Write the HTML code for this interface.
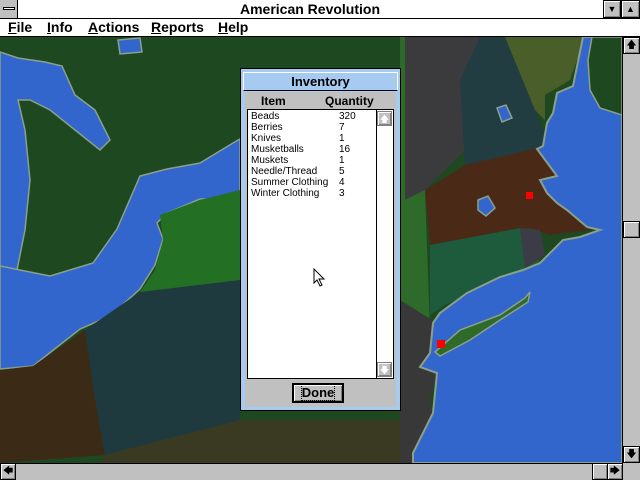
<!DOCTYPE html>
<html><head><style>
*{margin:0;padding:0;box-sizing:border-box}
body{width:640px;height:480px;overflow:hidden;background:#c0c0c0;font-family:"Liberation Sans",sans-serif;position:relative}
.abs{position:absolute}
.title{left:0;top:0;width:640px;height:19px;background:#fff;border-bottom:1px solid #000}
.menu{left:0;top:19px;width:640px;height:18px;background:#fff;border-bottom:1px solid #000;font-weight:bold;font-size:14px}
.menu span{position:absolute;top:0px}
.btn{background:#c0c0c0;border:1px solid #000;box-shadow:inset 1px 1px #fff,inset -1px -1px #808080}
.dlg{left:240px;top:68px;width:161px;height:343px;background:#a6caf0;border:1px solid #000}
.list{font-size:10px;line-height:11px}
</style></head><body>
<div class="abs title">
 <div class="abs" style="left:0;top:0;width:18px;height:18px;background:#c0c0c0;border-right:1px solid #000"><div class="abs" style="left:3px;top:7px;width:12px;height:3px;background:#fff;border:1px solid #000"></div></div>
 <div class="abs" style="left:0;width:620px;top:1px;text-align:center;font-weight:bold;font-size:14px">American Revolution</div>
 <div class="abs btn" style="left:603px;top:0;width:18px;height:18px;font-size:9px;text-align:center;line-height:17px">▼</div>
 <div class="abs btn" style="left:621px;top:0;width:19px;height:18px;font-size:9px;text-align:center;line-height:17px">▲</div>
</div>
<div class="abs menu">
 <span style="left:8px"><u>F</u>ile</span>
 <span style="left:47px"><u>I</u>nfo</span>
 <span style="left:88px"><u>A</u>ctions</span>
 <span style="left:151px"><u>R</u>eports</span>
 <span style="left:218px"><u>H</u>elp</span>
</div>
<svg class="abs" style="left:0;top:37px" width="622" height="426" viewBox="0 37 622 426">
 <rect x="0" y="37" width="622" height="426" fill="#1e4820"/>
 <polygon points="400,37 420,37 425,190 430,330 440,340 420,360 400,360" fill="#2e6a2a"/>
 <polygon points="400,300 432,320 440,360 430,400 440,440 430,463 400,463" fill="#383838"/>
 <!-- NE regions -->
 <polygon points="405,37 480,37 460,80 465,150 425,190 405,200" fill="#3b3b3e"/>
 <polygon points="480,37 505,37 535,110 550,145 530,150 465,165 460,80" fill="#213d42"/>
 <polygon points="505,37 585,37 570,80 545,95 545,120 535,110" fill="#4a5e2a"/>
 <polygon points="425,190 465,165 530,150 545,145 555,175 580,200 600,212 590,230 550,235 530,228 430,245" fill="#4a2a16"/>
 <polygon points="430,245 520,228 540,262 500,280 445,305 430,315" fill="#1e5a3c"/>
 <polygon points="520,228 540,230 545,255 525,268" fill="#3c3c46"/>
 <!-- ocean right -->
 <polygon points="583,37 622,37 622,463 413,463 413,453 433,413 437,373 420,367 430,353 433,323 440,313 467,293 500,277 523,270 540,263 563,240 580,237 600,230 587,227 567,210 557,203 547,193 540,180 557,176 537,149 543,146 547,123 553,113 557,93 573,86" fill="#3366cc" stroke="#8aa08a" stroke-width="2"/>
 <polygon points="592,37 622,37 622,115 600,108 590,90 588,60" fill="#1e4820" stroke="#8aa08a" stroke-width="1.5"/>
 <polygon points="435,352 460,330 500,315 525,298 530,292 528,302 500,320 470,340 440,356" fill="#2e6a2a" stroke="#8aa08a" stroke-width="1.5"/>
 <polygon points="478,200 488,196 495,208 486,216 478,210" fill="#3366cc" stroke="#8aa08a" stroke-width="1.5"/>
 <polygon points="497,108 506,105 512,118 502,122" fill="#3366cc" stroke="#8aa08a" stroke-width="1.5"/>
 <rect x="526" y="192" width="7" height="7" fill="#f00"/>
 <rect x="437" y="340" width="8" height="8" fill="#f00"/>
 <!-- left -->
 <polygon points="0,52 18,58 45,62 62,66 75,95 95,110 110,140 100,150 75,130 50,110 30,100 18,100 25,130 30,180 25,230 15,280 0,290" fill="#3366cc" stroke="#8aa08a" stroke-width="1.5"/>
 <polygon points="0,266 50,276 93,263 117,229 140,176 167,169 200,163 233,143 240,139 240,199 200,199 167,213 157,223 163,239 155,265 140,289 110,316 80,329 33,366 0,369" fill="#3366cc" stroke="#8aa08a" stroke-width="1.5"/>
 <polygon points="160,215 200,200 240,190 240,290 145,310 140,292 155,270 163,240" fill="#236f23"/>
 <polygon points="85,330 140,292 240,280 240,420 105,455 95,400" fill="#1f3a3e"/>
 <polygon points="0,370 33,366 85,330 95,400 105,455 0,463" fill="#3a2a16"/>
 <polygon points="105,455 240,420 400,420 400,463 100,463" fill="#3a3a22"/>
 <polygon points="118,40 140,38 142,52 120,54" fill="#3366cc" stroke="#8aa08a" stroke-width="1.5"/>
</svg>
<!-- right scrollbar -->
<div class="abs" style="left:622px;top:37px;width:18px;height:426px;background:#c0c0c0;border-left:1px solid #000"></div>
<div class="abs btn" style="left:623px;top:37px;width:17px;height:17px;font-size:10px;text-align:center;line-height:16px">🡅</div>
<div class="abs btn" style="left:623px;top:221px;width:17px;height:17px"></div>
<div class="abs btn" style="left:623px;top:446px;width:17px;height:17px;font-size:10px;text-align:center;line-height:16px">🡇</div>
<!-- bottom scrollbar -->
<div class="abs" style="left:0;top:463px;width:622px;height:17px;background:#c0c0c0;border-top:1px solid #000"></div>
<div class="abs btn" style="left:0;top:463px;width:16px;height:17px;font-size:10px;text-align:center;line-height:16px">🡄</div>
<div class="abs btn" style="left:592px;top:463px;width:16px;height:17px"></div>
<div class="abs btn" style="left:607px;top:463px;width:16px;height:17px;font-size:10px;text-align:center;line-height:16px">🡆</div>
<!-- dialog -->
<div class="abs dlg">
 <div class="abs" style="left:2px;top:3px;width:155px;height:19px;border:1px solid #fff;border-bottom:1px solid #000;text-align:center;font-weight:bold;font-size:13px;line-height:17px">Inventory</div>
 <div class="abs" style="left:4px;top:23px;width:151px;height:315px;background:#c0c0c0"></div>
 <div class="abs" style="left:20px;top:25px;font-weight:bold;font-size:12px">Item</div>
 <div class="abs" style="left:84px;top:25px;font-weight:bold;font-size:12px">Quantity</div>
 <div class="abs list" style="left:6px;top:40px;width:147px;height:270px;background:#fff;border:1px solid #000">
  <div class="abs" style="left:3px;top:1px">Beads<br>Berries<br>Knives<br>Musketballs<br>Muskets<br>Needle/Thread<br>Summer Clothing<br>Winter Clothing</div>
  <div class="abs" style="left:91px;top:1px">320<br>7<br>1<br>16<br>1<br>5<br>4<br>3</div>
  <div class="abs" style="left:128px;top:0;width:17px;height:268px;border-left:1px solid #000"></div>
  <div class="abs btn" style="left:129px;top:1px;width:15px;height:15px;border-color:#808080;color:#fff;font-size:9px;text-align:center;line-height:14px">🡅</div>
  <div class="abs btn" style="left:129px;top:252px;width:15px;height:15px;border-color:#808080;color:#fff;font-size:9px;text-align:center;line-height:14px">🡇</div>
 </div>
 <div class="abs btn" style="left:51px;top:314px;width:52px;height:20px;border:2px solid #000;font-weight:bold;font-size:13px;text-align:center;line-height:16px"><span style="outline:1px dotted #000">Done</span></div>
</div>
<svg class="abs" style="left:313px;top:268px" width="14" height="20"><path d="M1 1 L1 15 L4 12 L7 18 L9 17 L6 11 L11 11 Z" fill="#fff" stroke="#000"/></svg>
</body></html>
